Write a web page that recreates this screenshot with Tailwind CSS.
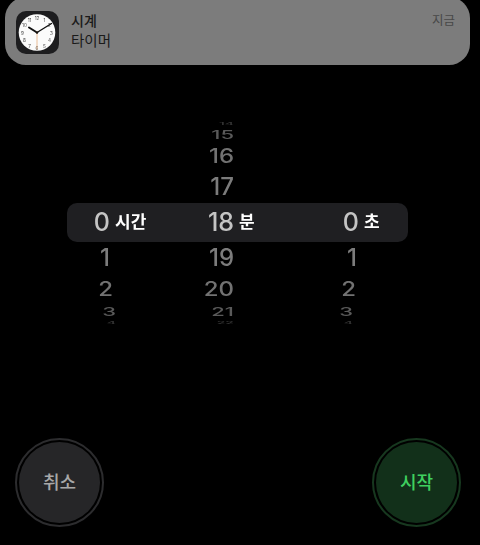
<!DOCTYPE html>
<html>
<head>
  <meta charset="UTF-8" />
  <meta name="viewport" content="width=device-width, initial-scale=1.0" />
  <script src="https://cdn.jsdelivr.net/npm/@tailwindcss/browser@4"></script>
</head>
<body class="bg-black">
<div class="w-[480px] h-[545px] overflow-hidden bg-black font-['Inter','Noto_Sans_CJK_KR',sans-serif]">

  <!-- notification banner -->
  <div class="ml-[5px] -mt-[3px] w-[465px] h-[68px] rounded-[21px] bg-[#7c7c7c] flex items-start pl-[11px] pr-[15px] pt-[14px]">
    <svg width="43" height="43" viewBox="0 0 43 43" class="shrink-0 blur-[0.3px]">
      <rect width="43" height="43" rx="10" fill="#1d1d1f" />
      <circle cx="21" cy="21.5" r="18.3" fill="#fbfbfb" />
      <g font-size="4.6" font-family="Inter, sans-serif" text-anchor="middle" fill="#444">
        <text x="21" y="8.5">12</text>
        <text x="28.5" y="10.5">1</text>
        <text x="33.5" y="16">2</text>
        <text x="35.5" y="23.5">3</text>
        <text x="33.5" y="31">4</text>
        <text x="28.5" y="36.5">5</text>
        <text x="21" y="38.5">6</text>
        <text x="13.5" y="36.5">7</text>
        <text x="8.5" y="31">8</text>
        <text x="6.5" y="23.5">9</text>
        <text x="8.5" y="16">10</text>
        <text x="13.5" y="10.5">11</text>
      </g>
      <path d="M21 21.5L13 16.5" stroke="#111" stroke-width="2" stroke-linecap="round" />
      <path d="M21 21.5L35.5 12.5" stroke="#111" stroke-width="1.4" stroke-linecap="round" />
      <path d="M21 20L21 38.5" stroke="#e8b080" stroke-width="0.8" />
      <circle cx="21" cy="21.5" r="1.2" fill="#111" />
    </svg>
    <div class="ml-[12px] flex-1 text-[#1a1a1a] text-[14px] leading-[20px] font-medium">
      <div>시계</div>
      <div class="text-[14.5px] font-normal">타이머</div>
    </div>
    <div class="mt-[2px] text-[12.5px] leading-[16px] text-[#484848]">지금</div>
  </div>

  <!-- time picker -->
  <div class="mt-[55px] ml-[67px] w-[341px] text-[#7c7c7c] text-[24px] font-medium text-right blur-[0.4px]">
    <div class="grid grid-cols-[43px_86px_38px_87px_38px_49px] h-[8px] items-center text-[#383838] text-[14px] leading-[8px]">
      <span></span><span></span><span class="scale-y-[0.25]">14</span>
    </div>
    <div class="grid grid-cols-[43px_86px_38px_87px_38px_49px] h-[14px] items-center text-[#5a5a5a] text-[22px] leading-[14px]">
      <span></span><span></span><span class="scale-y-[0.55]">15</span>
    </div>
    <div class="grid grid-cols-[43px_86px_38px_87px_38px_49px] h-[28px] items-center leading-none text-[#727272]">
      <span></span><span></span><span class="scale-y-[0.82]">16</span>
    </div>
    <div class="grid grid-cols-[43px_86px_38px_87px_38px_49px] h-[33px] items-center leading-none">
      <span></span><span></span><span>17</span>
    </div>

    <div class="grid grid-cols-[43px_86px_38px_87px_38px_49px] h-[39px] items-center leading-none rounded-[10px] bg-[#1f1f22] text-[#c4c4c4] text-[25px]">
      <span>0</span>
      <span class="pl-[5px] text-left text-[17px] font-semibold text-white">시간</span>
      <span>18</span>
      <span class="pl-[5px] text-left text-[17px] font-semibold text-white">분</span>
      <span>0</span>
      <span class="pl-[5px] text-left text-[17px] font-semibold text-white">초</span>
    </div>

    <div class="grid grid-cols-[43px_86px_38px_87px_38px_49px] h-[32px] items-center leading-none">
      <span>1</span><span></span><span>19</span><span></span><span class="-translate-x-[2px]">1</span>
    </div>
    <div class="grid grid-cols-[43px_86px_38px_87px_38px_49px] h-[29px] items-center leading-none text-[#727272]">
      <span class="scale-y-[0.82] translate-x-[3px]">2</span><span></span><span class="scale-y-[0.82]">20</span><span></span><span class="scale-y-[0.82] -translate-x-[3px]">2</span>
    </div>
    <div class="grid grid-cols-[43px_86px_38px_87px_38px_49px] h-[17px] items-center leading-[17px] text-[22px] text-[#5a5a5a]">
      <span class="scale-y-[0.55] translate-x-[6px]">3</span><span></span><span class="scale-y-[0.55]">21</span><span></span><span class="scale-y-[0.55] -translate-x-[6px]">3</span>
    </div>
    <div class="grid grid-cols-[43px_86px_38px_87px_38px_49px] h-[6px] items-center leading-[6px] text-[14px] text-[#383838]">
      <span class="scale-y-[0.25] translate-x-[6px]">4</span><span></span><span class="scale-y-[0.25]">22</span><span></span><span class="scale-y-[0.25] -translate-x-[6px]">4</span>
    </div>
  </div>

  <!-- buttons -->
  <div class="mt-[112px] pl-[15px] pr-[19px] flex justify-between text-[18px] font-medium">
    <div class="size-[89px] rounded-full border-2 border-[#2c2c2e] p-[2px]">
      <div class="size-full rounded-full bg-[#262628] flex items-center justify-center text-[#a8a8a8]">취소</div>
    </div>
    <div class="size-[89px] rounded-full border-2 border-[#17381f] p-[2px]">
      <div class="size-full rounded-full bg-[#12301a] flex items-center justify-center text-[#3fd05f]">시작</div>
    </div>
  </div>
</div>
</body>
</html>
